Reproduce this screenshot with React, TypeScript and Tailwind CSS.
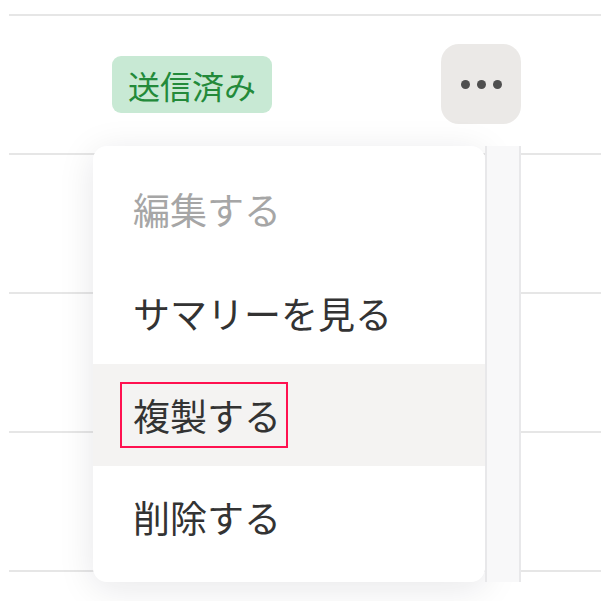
import React from "react";

const font = { fontFamily: '"Noto Sans CJK JP", "Noto Sans", sans-serif' };

export default function App() {
  const rows = [0, 1, 2, 3];
  return (
    <div className="relative w-[601px] h-[601px] overflow-hidden bg-white" style={font}>
      <div className="pl-[9px] pt-[14px]">
        <div className="flex flex-col">
          {rows.map((i) => (
            <div key={i} className="h-[139px] border-t-2 border-[#e6e6e6]">
              {i === 0 && (
                <div className="flex items-start">
                  <div className="ml-[103px] mt-[40px] h-[57px] w-[160px] rounded-[9px] bg-[#c8e9d4] flex items-center justify-center text-[32px] text-[#238a3a] leading-none">
                    送信済み
                  </div>
                  <div className="ml-[169px] mt-[28px] h-[80px] w-[80px] rounded-[18px] bg-[#ebe9e7] flex items-center justify-center gap-[7px]">
                    <span className="w-[9px] h-[9px] rounded-full bg-[#4f4f4f]" />
                    <span className="w-[9px] h-[9px] rounded-full bg-[#4f4f4f]" />
                    <span className="w-[9px] h-[9px] rounded-full bg-[#4f4f4f]" />
                  </div>
                </div>
              )}
            </div>
          ))}
          <div className="border-t-2 border-[#e6e6e6]" />
        </div>
      </div>

      <div className="absolute left-[93px] top-[146px] w-[392px] h-[436px] rounded-[14px] bg-white shadow-[0_6px_36px_rgba(20,20,40,0.10)] py-[14px] flex flex-col">
        <div className="h-[102px] flex items-center pl-[40px] pb-[4px] text-[37px] text-[#a6a6a6] leading-none">
          編集する
        </div>
        <div className="h-[102px] flex items-center pl-[40px] text-[37px] text-[#333333] leading-none">
          サマリーを見る
        </div>
        <div className="h-[102px] flex items-center pl-[27px] bg-[#f4f3f2]">
          <div className="border-2 border-[#ff1150] pl-[11px] pr-[5px] h-[66px] flex items-center text-[37px] text-[#333333] leading-none">
            複製する
          </div>
        </div>
        <div className="h-[102px] flex items-center pl-[40px] text-[37px] text-[#333333] leading-none">
          削除する
        </div>
      </div>

      <div className="absolute left-[485px] top-[146px] w-[36px] h-[436px] bg-[#f8f8f9] border-l-2 border-r-2 border-[#e8e8ea]" />
    </div>
  );
}
